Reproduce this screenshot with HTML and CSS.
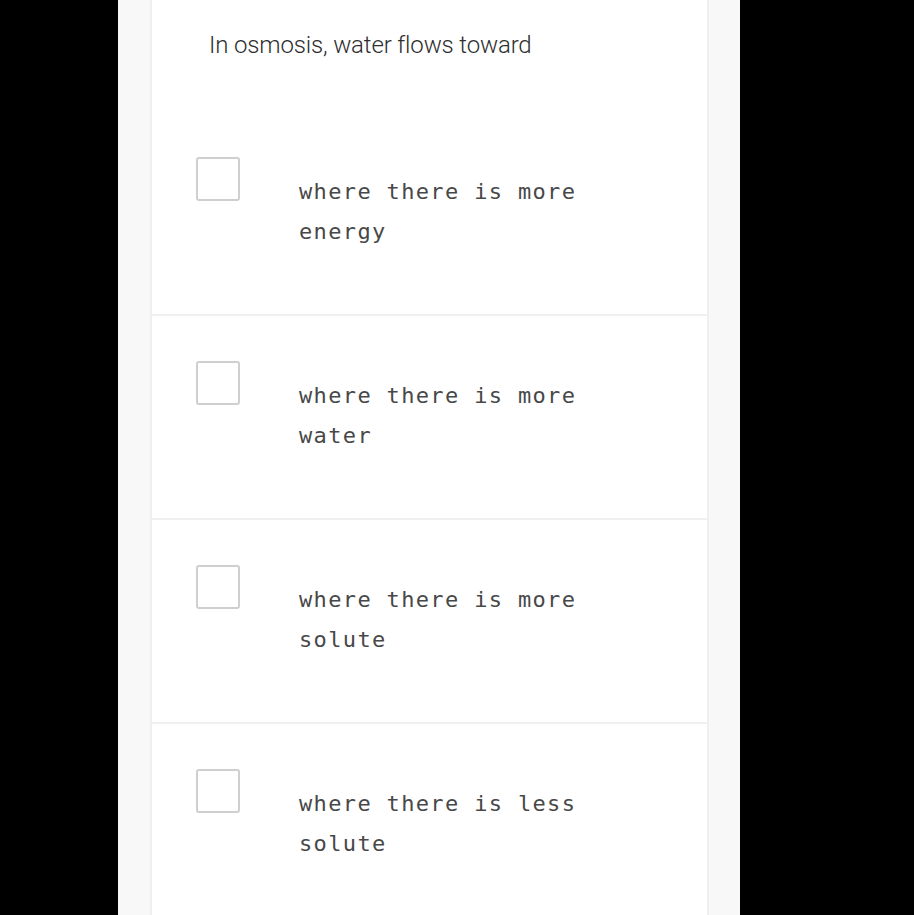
FILE: index.html
```html
<!DOCTYPE html>
<html>
<head>
<meta charset="utf-8">
<link rel="stylesheet" href="styles.css">
</head>
<body>
<div class="panel">
  <div class="card">
    <div class="question">In osmosis, water flows toward</div>
    <div class="option">
      <span class="box"></span>
      <span class="label">where there is more energy</span>
    </div>
    <div class="option">
      <span class="box"></span>
      <span class="label">where there is more water</span>
    </div>
    <div class="option">
      <span class="box"></span>
      <span class="label">where there is more solute</span>
    </div>
    <div class="option">
      <span class="box"></span>
      <span class="label">where there is less solute</span>
    </div>
  </div>
</div>
</body>
</html>
```
FILE: styles.css
```css
html, body {
  margin: 0;
  padding: 0;
  background: #000;
  height: 100%;
  overflow: hidden;
}
.panel {
  margin-left: 118px;
  width: 622px;
  height: 915px;
  background: #f8f8f8;
}
.card {
  margin-left: 32px;
  width: 555px;
  height: 915px;
  background: #fff;
  border-left: 2px solid #efefef;
  border-right: 2px solid #efefef;
}
.question {
  height: 112px;
  box-sizing: border-box;
  padding: 30px 0 0 57px;
  font-family: Roboto, "Liberation Sans", sans-serif;
  font-weight: 300;
  font-size: 24px;
  line-height: 30px;
  color: #2e2e2e;
  letter-spacing: -0.15px;
}
.option {
  display: flex;
  align-items: flex-start;
  height: 204px;
  box-sizing: border-box;
  padding: 45px 0 0 44px;
  border-bottom: 2px solid #f0f0f0;
}
.box {
  flex: none;
  width: 44px;
  height: 44px;
  box-sizing: border-box;
  border: 2px solid #cfcfcf;
  border-radius: 3px;
}
.label {
  margin: 15px 0 0 59px;
  width: 300px;
  font-family: "DejaVu Sans Mono", monospace;
  font-size: 22px;
  line-height: 40px;
  letter-spacing: 1.35px;
  color: #484848;
}
```
